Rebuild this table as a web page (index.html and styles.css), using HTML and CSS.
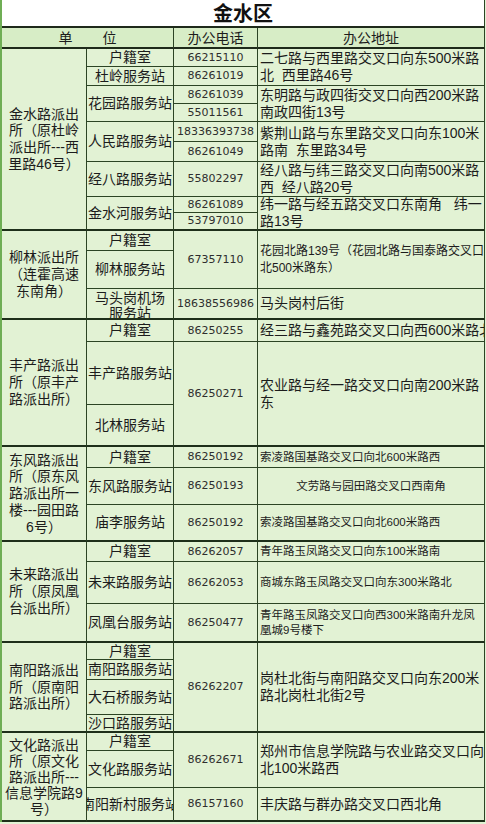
FILE: index.html
```html
<!DOCTYPE html>
<html lang="zh">
<head>
<meta charset="utf-8">
<title>金水区</title>
<link rel="stylesheet" href="styles.css">
</head>
<body>
<div class="sheet">
  <div class="title"><span>金水区</span></div>
  <div class="grid">
    <div class="hd cs2"><span>单</span><span>位</span></div>
    <div class="hd"><span>办公电话</span></div>
    <div class="hd"><span>办公地址</span></div>

    <div class="c1 s9 gb"><span>金水路派出<br>所（原杜岭<br>派出所---西<br>里路46号）</span></div>
    <div class="c2"><span>户籍室</span></div>
    <div class="ph"><span>66215110</span></div>
    <div class="ad s2"><span>二七路与西里路交叉口向东500米路<br>北&nbsp; 西里路46号</span></div>
    <div class="c2"><span>杜岭服务站</span></div>
    <div class="ph"><span>86261019</span></div>

    <div class="c2 s2"><span>花园路服务站</span></div>
    <div class="ph"><span>86261039</span></div>
    <div class="ad s2"><span>东明路与政四街交叉口向西200米路<br>南政四街13号</span></div>
    <div class="ph"><span>55011561</span></div>

    <div class="c2 s2"><span>人民路服务站</span></div>
    <div class="ph"><span>18336393738</span></div>
    <div class="ad s2"><span>紫荆山路与东里路交叉口向东100米<br>路南&nbsp; 东里路34号</span></div>
    <div class="ph"><span>86261049</span></div>

    <div class="c2"><span>经八路服务站</span></div>
    <div class="ph"><span>55802297</span></div>
    <div class="ad"><span>经八路与纬三路交叉口向南500米路<br>西&nbsp; 经八路20号</span></div>

    <div class="c2 s2 gb"><span>金水河服务站</span></div>
    <div class="ph"><span>86261089</span></div>
    <div class="ad s2 gb"><span>纬一路与经五路交叉口东南角&nbsp;&nbsp; 纬一<br>路13号</span></div>
    <div class="ph gb"><span>53797010</span></div>

    <div class="c1 s3 gb"><span>柳林派出所<br>（连霍高速<br>东南角）</span></div>
    <div class="c2"><span>户籍室</span></div>
    <div class="ph s2"><span>67357110</span></div>
    <div class="ad md s2"><span>花园北路139号（花园北路与国泰路交叉口<br>北500米路东）</span></div>
    <div class="c2"><span>柳林服务站</span></div>
    <div class="c2 top gb"><span>马头岗机场<br>服务站</span></div>
    <div class="ph gb"><span>18638556986</span></div>
    <div class="ad gb"><span>马头岗村后街</span></div>

    <div class="c1 s3 gb"><span>丰产路派出<br>所（原丰产<br>路派出所）</span></div>
    <div class="c2"><span>户籍室</span></div>
    <div class="ph"><span>86250255</span></div>
    <div class="ad"><span>经三路与鑫苑路交叉口向西600米路北</span></div>
    <div class="c2"><span>丰产路服务站</span></div>
    <div class="ph s2 gb"><span>86250271</span></div>
    <div class="ad s2 gb"><span>农业路与经一路交叉口向南200米路<br>东</span></div>
    <div class="c2 gb"><span>北林服务站</span></div>

    <div class="c1 s3 gb"><span>东风路派出<br>所（原东风<br>路派出所一<br>楼---园田路<br>6号）</span></div>
    <div class="c2"><span>户籍室</span></div>
    <div class="ph"><span>86250192</span></div>
    <div class="ad sm"><span>索凌路国基路交叉口向北600米路西</span></div>
    <div class="c2"><span>东风路服务站</span></div>
    <div class="ph"><span>86250193</span></div>
    <div class="ad sm mid"><span>文劳路与园田路交叉口西南角</span></div>
    <div class="c2 gb"><span>庙李服务站</span></div>
    <div class="ph gb"><span>86250192</span></div>
    <div class="ad sm gb"><span>索凌路国基路交叉口向北600米路西</span></div>

    <div class="c1 s3 gb"><span>未来路派出<br>所（原凤凰<br>台派出所）</span></div>
    <div class="c2"><span>户籍室</span></div>
    <div class="ph"><span>86262057</span></div>
    <div class="ad sm"><span>青年路玉凤路交叉口向东100米路南</span></div>
    <div class="c2"><span>未来路服务站</span></div>
    <div class="ph"><span>86262053</span></div>
    <div class="ad sm"><span>商城东路玉凤路交叉口向东300米路北</span></div>
    <div class="c2 gb"><span>凤凰台服务站</span></div>
    <div class="ph gb"><span>86250477</span></div>
    <div class="ad sm gb"><span>青年路玉凤路交叉口向西300米路南升龙凤<br>凰城9号楼下</span></div>

    <div class="c1 s4 gb"><span>南阳路派出<br>所（原南阳<br>路派出所）</span></div>
    <div class="c2"><span>户籍室</span></div>
    <div class="ph s4 gb"><span>86262207</span></div>
    <div class="ad s4 gb"><span>岗杜北街与南阳路交叉口向东200米<br>路北岗杜北街2号</span></div>
    <div class="c2"><span>南阳路服务站</span></div>
    <div class="c2"><span>大石桥服务站</span></div>
    <div class="c2 gb"><span>沙口路服务站</span></div>

    <div class="c1 s3 gb tight"><span>文化路派出<br>所（原文化<br>路派出所---<br>信息学院路9<br>号）</span></div>
    <div class="c2"><span>户籍室</span></div>
    <div class="ph s2"><span>86262671</span></div>
    <div class="ad s2"><span>郑州市信息学院路与农业路交叉口向<br>北100米路西</span></div>
    <div class="c2"><span>文化路服务站</span></div>
    <div class="c2 gb"><span>南阳新村服务站</span></div>
    <div class="ph gb"><span>86157160</span></div>
    <div class="ad gb"><span>丰庆路与群办路交叉口西北角</span></div>
  </div>
</div>
</body>
</html>
```
FILE: styles.css
```css
html, body {
  margin: 0;
  padding: 0;
}
body {
  background: #e2f2d4;
  font-family: "Liberation Sans", "Noto Sans CJK SC", sans-serif;
  color: #1c1c1c;
}
.sheet {
  width: 485px;
  border-left: 2px solid #6fae55;
  box-sizing: border-box;
}
.title {
  height: 28px;
  box-sizing: border-box;
  background: #ffffff;
  border-bottom: 2px solid #1e2a1a;
  border-right: 1px solid #2c4424;
  display: flex;
  align-items: center;
  justify-content: center;
  font-family: "Noto Sans CJK SC", sans-serif;
  font-weight: bold;
  font-size: 20px;
  line-height: 26px;
  color: #111;
}
.grid {
  display: grid;
  grid-template-columns: 85px 87px 84px 227px;
  grid-template-rows:
    21px
    18px 19px 18px 18px 20px 20px 35px 16px 18px
    20px 38px 31px
    22px 63px 42px
    21px 37px 37px
    20px 42px 39px
    17px 20px 35px 18px
    18px 37px 34px;
}
.grid > div {
  box-sizing: border-box;
  border-right: 1px solid #2c4424;
  border-bottom: 1px solid #2c4424;
  display: flex;
  align-items: center;
  justify-content: center;
  overflow: hidden;
  font-size: 14px;
  line-height: 16px;
  white-space: nowrap;
}
.grid > .gb {
  border-bottom-width: 2px;
  border-bottom-color: #1e2f1a;
}
.s2 { grid-row: span 2; }
.s3 { grid-row: span 3; }
.s4 { grid-row: span 4; }
.s9 { grid-row: span 9; }
.cs2 { grid-column: span 2; }

.grid > .hd {
  background: #d7edc6;
  border-bottom: 2px solid #1e2a1a;
  gap: 30px;
  font-size: 14px;
}
.grid > .c1 {
  text-align: center;
  line-height: 16.7px;
  padding: 0 1px;
}
.grid > .c1.tight {
  line-height: 16px;
}
.grid > .c2 {
  text-align: center;
  line-height: 15px;
}
.grid > .c2.top {
  align-items: flex-start;
  padding-top: 2px;
}
.grid > .ph {
  font-family: "DejaVu Sans", "Liberation Sans", sans-serif;
  font-size: 11px;
  color: #2e2e2e;
}
.grid > .ad {
  justify-content: flex-start;
  padding-left: 2px;
  line-height: 17px;
}
.grid > .ad.md {
  font-size: 12px;
  line-height: 17px;
}
.grid > .ad.sm {
  font-size: 11.5px;
  line-height: 15px;
}
.grid > .ad.mid {
  justify-content: center;
  padding-left: 0;
}
```
